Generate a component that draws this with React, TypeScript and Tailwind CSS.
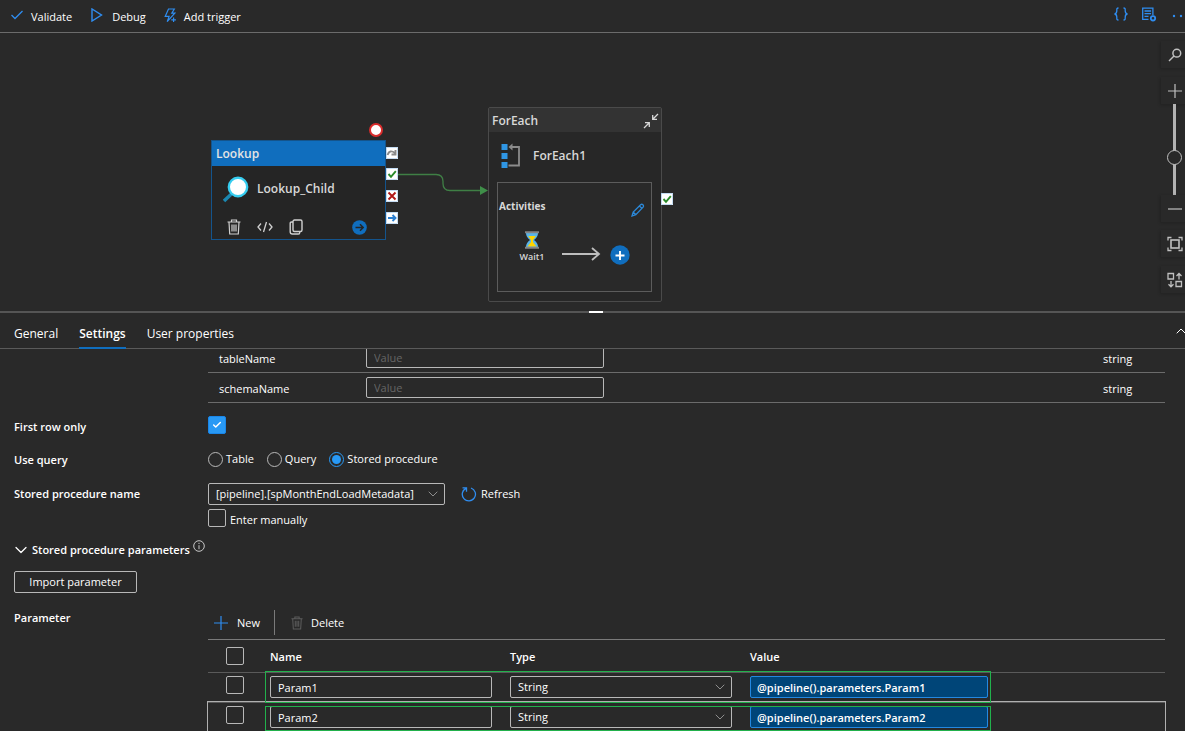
import React, { useState } from 'react';
import { Check, ChevronDown, ChevronUp } from 'lucide-react';

interface ProcParam {
    name: string;
    type: string;
    value: string;
}

const params: ProcParam[] = [
    { name: 'Param1', type: 'String', value: '@pipeline().parameters.Param1' },
    { name: 'Param2', type: 'String', value: '@pipeline().parameters.Param2' },
];

const TrashIcon = ({ className }: { className?: string }) => (
    <svg className={className} viewBox="0 0 14 16" fill="none" stroke="currentColor" strokeWidth="1.2">
        <path d="M0.5 3h13M4.5 3V1h5v2M2 3l0.7 12h8.6L12 3M5 5.5v7M7 5.5v7M9 5.5v7" />
    </svg>
);

const Checkbox = ({ label, id, defaultChecked }: { label?: string; id?: string; defaultChecked?: boolean }) => (
    <span className="relative block size-[18px] shrink-0">
        <input
            id={id}
            type="checkbox"
            aria-label={label}
            defaultChecked={defaultChecked}
            className="peer block size-[18px] appearance-none rounded-xs border border-[#b8b8b8] checked:border-[#1a86e8] checked:bg-[#2899f5]"
        />
        <Check size={10} strokeWidth={3.5} className="pointer-events-none absolute left-1 top-1 hidden text-white peer-checked:block" />
    </span>
);

const Radio = ({ label, defaultChecked }: { label: string; defaultChecked?: boolean }) => (
    <label className="flex items-center gap-[3px]">
        <input
            type="radio"
            name="useQuery"
            defaultChecked={defaultChecked}
            className="grid size-[15px] appearance-none place-content-center rounded-full border border-[#b8b8b8] before:size-[9px] before:rounded-full checked:border-[#2899f5] checked:before:bg-[#2899f5]"
        />
        {label}
    </label>
);

interface SelectProps {
    label?: string;
    id?: string;
    options: string[];
    className: string;
}

const Select = ({ label, id, options, className }: SelectProps) => (
    <div className={`relative ${className}`}>
        <select
            id={id}
            aria-label={label}
            className="block h-[22px] w-full appearance-none rounded-xs border border-[#b8b8b8] bg-transparent pl-[7px] pr-6"
        >
            {options.map((o) => (
                <option key={o}>{o}</option>
            ))}
        </select>
        <ChevronDown size={16} strokeWidth={1.2} className="pointer-events-none absolute right-1 top-[3px] text-[#a8a8a8]" />
    </div>
);

const Toolbar = () => (
    <header className="flex h-[33px] shrink-0 items-center justify-between border-b border-[#6b6b6b] pl-[11px]">
        <div className="flex items-center gap-[18px] pt-[2px]">
            <button className="flex items-center gap-2">
                <svg className="-mt-1 h-3 w-3 text-[#2f8df0]" viewBox="0 0 12 12" fill="none" stroke="currentColor" strokeWidth="1.3">
                    <path d="M0.5 6l3.5 3.5L11.5 2" />
                </svg>
                Validate
            </button>
            <button className="flex items-center gap-2">
                <svg className="-mt-1 size-[14px] text-[#2f8df0]" viewBox="0 0 14 14" fill="none" stroke="currentColor" strokeWidth="1.4">
                    <path d="M2 1v12L11.5 7z" />
                </svg>
                Debug
            </button>
            <button className="flex items-center gap-2">
                <svg className="-mt-1 h-[15px] w-3 text-[#2f8df0]" viewBox="0 0 12 15" fill="none" stroke="currentColor" strokeWidth="1.2">
                    <path d="M4.5 1h5.8L7.8 5.2h3L3.2 13.6l1.9-5.2H1.2zM9.6 9.5v4.6M7.3 11.8h4.6" />
                </svg>
                Add trigger
            </button>
        </div>
        <div className="-mr-[14px] flex shrink-0 items-center gap-3 text-[#2f8df0]">
            <button aria-label="Code">
                <svg className="-mt-1 h-[14px] w-4" viewBox="0 0 16 14" fill="none" stroke="currentColor" strokeWidth="1.3">
                    <path d="M5.5 1C3.5 1 3.8 2.2 3.8 3.8S3.4 6.8 1.5 7c1.9.2 2.3 1.6 2.3 3.2S3.5 13 5.5 13M10.5 1c2 0 1.7 1.2 1.7 2.8s.4 3 2.3 3.2c-1.9.2-2.3 1.6-2.3 3.2s.3 2.8-1.7 2.8" />
                </svg>
            </button>
            <button aria-label="Properties">
                <svg className="-mt-1 h-[15px] w-4" viewBox="0 0 16 15" fill="none" stroke="currentColor" strokeWidth="1.3">
                    <path d="M7.5 12.3H1.7V1.2h10.2v7M3.5 4h6.6M3.5 6.7h6.6M3.5 9.4h4" />
                    <circle cx="12" cy="11.3" r="2.2" strokeWidth="1.8" />
                </svg>
            </button>
            <button aria-label="More">
                <svg className="h-1 w-[30px]" viewBox="0 0 30 4" fill="currentColor">
                    <circle cx="5" cy="2" r="1.2" />
                    <circle cx="12" cy="2" r="1.2" />
                    <circle cx="19" cy="2" r="1.2" />
                </svg>
            </button>
        </div>
    </header>
);

const Port = ({ className, color, d }: { className: string; color: string; d: string }) => (
    <svg className={`absolute h-3 w-3 ${className}`} viewBox="0 0 12 12" fill="none">
        <rect width="12" height="12" fill="#fff" />
        <rect x="0.5" y="0.5" width="11" height="11" stroke="#9cc4ea" strokeWidth="0.6" />
        <path d={d} stroke={color} strokeWidth="1.9" />
    </svg>
);

const checkPath = 'M2.5 6l2.5 2.8L9.8 3.2';

const LookupNode = () => (
    <div className="absolute left-[211px] top-[107px] h-[100px] w-[175px] border border-[#14548c] bg-[#252525]">
        <div className="flex h-[25px] items-center bg-[#106ebe] px-1 pt-px font-semibold text-[#e4e4e4]">Lookup</div>
        <div className="flex h-[45px] items-center gap-2 pl-[11px]">
            <svg className="h-7 w-[26px]" viewBox="0 0 26 28" fill="none">
                <path d="M1 26l8-7.5" stroke="#1b87b0" strokeWidth="3.4" />
                <circle cx="15" cy="12" r="9.2" fill="#fff" stroke="#36cdf0" strokeWidth="2.4" />
            </svg>
            <span className="font-semibold text-[#d8d8d8]">Lookup_Child</span>
        </div>
        <div className="flex items-center pl-[15px] pr-[18px] pt-2 text-[#d0d0d0]">
            <button aria-label="Delete activity">
                <TrashIcon className="h-4 w-[14px]" />
            </button>
            <button aria-label="View code" className="ml-4">
                <svg className="h-3 w-4" viewBox="0 0 16 12" fill="none" stroke="currentColor" strokeWidth="1.3">
                    <path d="M4 2.5L1 6l3 3.5M12 2.5L15 6l-3 3.5M9.5 1l-3 10" />
                </svg>
            </button>
            <button aria-label="Clone activity" className="ml-4">
                <svg className="h-4 w-[14px]" viewBox="0 0 14 16" fill="none" stroke="currentColor" strokeWidth="1.4">
                    <rect x="4" y="1" width="9" height="11.5" rx="1.5" />
                    <path d="M4 3H2.5Q1.2 3 1.2 4.3V12.8Q1.2 15 3.4 15H9.5Q10.7 15 10.7 13.8V12.5" />
                </svg>
            </button>
            <svg className="ml-auto size-[15px]" viewBox="0 0 15 15" fill="none">
                <circle cx="7.5" cy="7.5" r="7.3" fill="#106ebe" />
                <path d="M3.5 7.5h7.5M8 4.3l3.2 3.2L8 10.7" stroke="#252525" strokeWidth="1.5" />
            </svg>
        </div>
    </div>
);

const ForEachNode = () => (
    <div className="absolute left-[488px] top-[74px] h-[195px] w-[174px] rounded-xs border border-[#4a4a4a] bg-[#272727] text-[#d8d8d8]">
        <div className="flex h-6 items-center justify-between bg-[#333] pl-[3px] pr-[2px] pt-px">
            <span className="font-semibold">ForEach</span>
            <svg className="h-4 w-4" viewBox="0 0 16 16" fill="none" stroke="currentColor" strokeWidth="1.3">
                <path d="M15 1l-5 5M9.7 2v4.3H14M1 15l5-5M2 9.7h4.3V14" />
            </svg>
        </div>
        <div className="flex h-[47px] items-center gap-3 pl-3">
            <svg className="h-[26px] w-5" viewBox="0 0 20 26" fill="none">
                <path d="M0.5 1h6v6h-6zM0.5 10h6v6h-6zM0.5 19h6v6h-6z" fill="#2f96e4" />
                <path d="M9 4h9v18.5H7.5" stroke="#8c8c8c" strokeWidth="1.8" />
                <path d="M7.5 4l4-3.5v7z" fill="#8c8c8c" />
            </svg>
            <span className="font-semibold">ForEach1</span>
        </div>
        <div className="ml-2 mr-[9px] mt-[3px] h-[110px] border border-[#5c5c5c] bg-[#292929]">
            <div className="flex items-center justify-between pl-px pr-[6px] pt-3">
                <span className="text-[10px] font-bold">Activities</span>
                <svg className="mt-2 size-[14px]" viewBox="0 0 14 14" fill="none" stroke="#2b88d8" strokeWidth="1.3">
                    <path d="M1 13l1.2-4L9.6 1.8q1.2-1 2.3 0t.2 2.4L4.8 11.7zM2.2 9l2.6 2.7M8.5 3l2.6 2.6" />
                </svg>
            </div>
            <div className="flex items-end pl-5 pt-[14px]">
                <div className="flex w-7 flex-col items-center">
                    <svg className="h-[18px] w-4" viewBox="0 0 16 18" fill="none">
                        <path d="M2 2h12q0 4-4 7 4 3 4 7H2q0-4 4-7-4-3-4-7z" fill="#59b4e8" />
                        <path d="M4.2 5h7.6L9 9v2l3.5 4.5h-9L7 11V9z" fill="#ffd400" />
                        <path d="M1 1.3h14M1 16.7h14" stroke="#858585" strokeWidth="2" />
                    </svg>
                    <span className="text-[9px] font-semibold leading-4">Wait1</span>
                </div>
                <svg className="mb-1 ml-4 h-[14px] w-10" viewBox="0 0 40 14" fill="none" stroke="#bdbdbd" strokeWidth="1.8">
                    <path d="M0 7h37M30 1l7 6-7 6" />
                </svg>
                <button aria-label="Add activity" className="ml-2">
                    <svg className="block size-5" viewBox="0 0 20 20">
                        <circle cx="10" cy="10" r="9.7" fill="#106ebe" />
                        <path d="M10 6v9M5.5 10.5h9" stroke="#fff" strokeWidth="1.9" />
                    </svg>
                </button>
            </div>
        </div>
    </div>
);

const railButton = 'flex h-[27px] w-full items-center justify-center shadow-[-1px_1px_3px_rgba(0,0,0,0.2)]';

const ZoomRail = () => (
    <div className="absolute -right-[3px] top-2 flex w-[27px] flex-col items-center text-[#c0c0c0]">
        <button aria-label="Search" className={railButton}>
            <svg className="size-[14px]" viewBox="0 0 14 14" fill="none" stroke="currentColor" strokeWidth="1.5">
                <circle cx="8.8" cy="5.2" r="3.9" />
                <path d="M6 8l-5 5" />
            </svg>
        </button>
        <button aria-label="Zoom in" className={`mt-[9px] ${railButton}`}>
            <svg className="size-[14px]" viewBox="0 0 14 14" stroke="currentColor" strokeWidth="1.2">
                <path d="M7 0v14M0 7h14" />
            </svg>
        </button>
        <input
            type="range"
            aria-label="Zoom level"
            defaultValue={40}
            className="h-[91px] w-4 appearance-none bg-transparent [direction:rtl] [writing-mode:vertical-lr] [&::-webkit-slider-runnable-track]:w-[3px] [&::-webkit-slider-runnable-track]:bg-[#b3b3b3] [&::-webkit-slider-thumb]:-ml-[6px] [&::-webkit-slider-thumb]:size-[15px] [&::-webkit-slider-thumb]:appearance-none [&::-webkit-slider-thumb]:rounded-full [&::-webkit-slider-thumb]:border [&::-webkit-slider-thumb]:border-[#c0c0c0] [&::-webkit-slider-thumb]:bg-[#292929]"
        />
        <button aria-label="Zoom out" className={railButton}>
            <svg className="size-[14px]" viewBox="0 0 14 14" stroke="currentColor" strokeWidth="1.2">
                <path d="M0 7h14" />
            </svg>
        </button>
        <button aria-label="Zoom to fit" className={`mt-2 ${railButton}`}>
            <svg className="size-4" viewBox="0 0 16 16" fill="none" stroke="currentColor" strokeWidth="1.3">
                <path d="M1 4.5v-3h3.5M11.5 1.5H15v3M15 11.5v3h-3.5M4.5 14.5H1v-3" />
                <rect x="4" y="4" width="8" height="8" strokeWidth="1.6" />
            </svg>
        </button>
        <button aria-label="Auto align" className={`mt-[9px] ${railButton}`}>
            <svg className="size-4" viewBox="0 0 16 16" fill="none" stroke="currentColor" strokeWidth="1.3">
                <path d="M1 1.5h5.5V7H1zM9 9.5h5.5v5H9zM12 7.5v-6M9.5 4L12 1.5 14.5 4M4 9v6M1.5 12.3L4 14.8l2.5-2.5" />
            </svg>
        </button>
    </div>
);

const Canvas = () => (
    <main className="relative h-[278px] shrink-0 overflow-hidden text-[12px]">
        <svg className="absolute left-[398px] top-[135px] h-[28px] w-[91px]" viewBox="0 0 91 28" fill="none">
            <path d="M0 6.5h38q7 0 7 7v2q0 7 7 7h30" stroke="#3f7f45" strokeWidth="1.3" />
            <path d="M82 18v9l8-4.5z" fill="#3f8f49" />
        </svg>
        <LookupNode />
        <span className="absolute left-[369px] top-[90px] size-[14px] rounded-full border-2 border-[#d92c2c] bg-white" />
        <Port className="left-[386px] top-[114px]" color="#8a8a8a" d="M1.5 8q2-6 7.5-2M9.5 3v4.5H5.5" />
        <Port className="left-[386px] top-[135px]" color="#2a8a2a" d={checkPath} />
        <Port className="left-[386px] top-[157px]" color="#b01818" d="M2.5 2.5l7 7M9.5 2.5l-7 7" />
        <Port className="left-[386px] top-[179px]" color="#2b7fd0" d="M2 6h7M6.5 3l3 3-3 3" />
        <ForEachNode />
        <Port className="left-[661px] top-[160px]" color="#2a8a2a" d={checkPath} />
        <ZoomRail />
    </main>
);

const tabs = ['General', 'Settings', 'User properties'];

const Tabs = () => {
    const [active, setActive] = useState('Settings');
    return (
        <div className="flex h-9 shrink-0 items-stretch justify-between border-b border-[#5a5a5a] pl-[14px]">
            <nav className="flex gap-[21px] text-[12px]">
                {tabs.map((t) => (
                    <button
                        key={t}
                        onClick={() => setActive(t)}
                        className={
                            t === active
                                ? '-mb-px border-b-2 border-[#106ebe] pt-[7px] font-semibold'
                                : '-mb-px border-b-2 border-transparent pt-[7px]'
                        }
                    >
                        {t}
                    </button>
                ))}
            </nav>
            <button aria-label="Collapse panel" className="-mr-1">
                <ChevronUp size={16} strokeWidth={1.5} />
            </button>
        </div>
    );
};

interface RowProps {
    label: string;
    htmlFor?: string;
    className?: string;
    children: React.ReactNode;
}

const Row = ({ label, htmlFor, className, children }: RowProps) => (
    <div className={`flex items-start ${className ?? ''}`}>
        <label htmlFor={htmlFor} className="w-[194px] shrink-0 font-semibold leading-[22px]">
            {label}
        </label>
        <div className="min-w-0 flex-1">{children}</div>
    </div>
);

const DatasetProperties = () => (
    <table className="w-full border-separate border-spacing-0">
        <tbody>
            {['tableName', 'schemaName'].map((name) => (
                <tr key={name} className="h-[30px]">
                    <td className="w-[158px] border-b border-[#6b6b6b] pl-[11px] pt-[3px]">
                        <label htmlFor={name}>{name}</label>
                    </td>
                    <td className="border-b border-[#6b6b6b] pb-1 pt-1">
                        <input
                            id={name}
                            placeholder="Value"
                            className="block h-[21px] w-[238px] rounded-xs border border-[#b8b8b8] bg-transparent px-[7px] placeholder:text-[#666]"
                        />
                    </td>
                    <td className="w-[62px] border-b border-[#6b6b6b] pt-[3px]">string</td>
                </tr>
            ))}
        </tbody>
    </table>
);

const ParameterTable = () => (
    <div className="relative mt-1">
        <table className="w-full border-separate border-spacing-0 text-left">
            <thead>
                <tr className="h-[33px]">
                    <th className="w-[62px] border-t border-[#7a7a7a] pl-[18px]">
                        <Checkbox label="Select all" />
                    </th>
                    <th className="w-60 border-t border-[#7a7a7a] pt-[2px] font-semibold">Name</th>
                    <th className="w-60 border-t border-[#7a7a7a] pt-[2px] font-semibold">Type</th>
                    <th className="border-t border-[#7a7a7a] pt-[2px] font-semibold">Value</th>
                </tr>
            </thead>
            <tbody>
                {params.map((p) => (
                    <tr key={p.name} className="h-[30px] align-top last:outline last:outline-[#b0b0b0]">
                        <td className="border-t border-[#5a5a5a] pl-[18px] pt-[3px]">
                            <Checkbox label={`Select ${p.name}`} />
                        </td>
                        <td className="border-t border-[#5a5a5a] pt-[3px]">
                            <input
                                aria-label="Name"
                                defaultValue={p.name}
                                className="block h-[22px] w-[222px] rounded-xs border border-[#b8b8b8] bg-transparent px-[7px]"
                            />
                        </td>
                        <td className="border-t border-[#5a5a5a] pt-[3px]">
                            <Select label="Type" options={[p.type]} className="w-[222px]" />
                        </td>
                        <td className="border-t border-[#5a5a5a] pt-[3px]">
                            <input
                                aria-label="Value"
                                defaultValue={p.value}
                                className="block h-[22px] w-[238px] rounded-xs border border-[#2488e0] bg-[#004578] px-[6px] font-semibold"
                            />
                        </td>
                    </tr>
                ))}
            </tbody>
        </table>
        {/* highlight frames over both parameter rows */}
        <div className="pointer-events-none absolute left-[57px] top-8 h-8 w-[726px] border border-[#22b14c]" />
        <div className="pointer-events-none absolute left-[57px] top-[67px] h-[25px] w-[726px] border border-[#22b14c]" />
    </div>
);

const SettingsForm = () => (
    <section className="min-h-0 flex-1 overflow-hidden">
        <div className="-mt-[6px] pl-[14px] pr-5">
            <div className="ml-[194px]">
                <DatasetProperties />
            </div>
            <Row label="First row only" htmlFor="firstRowOnly" className="mt-[13px] h-[22px]">
                <Checkbox id="firstRowOnly" defaultChecked />
            </Row>
            <Row label="Use query" className="mt-[11px] h-[22px]">
                <div className="flex h-5 items-center gap-[13px]">
                    <Radio label="Table" />
                    <Radio label="Query" />
                    <Radio label="Stored procedure" defaultChecked />
                </div>
            </Row>
            <Row label="Stored procedure name" htmlFor="procName" className="mt-3">
                <div className="flex items-center gap-4">
                    <Select id="procName" options={['[pipeline].[spMonthEndLoadMetadata]']} className="w-[237px]" />
                    <button className="flex items-center gap-1">
                        <svg className="size-4 text-[#2f8df0]" viewBox="0 0 16 16" fill="none" stroke="currentColor" strokeWidth="1.3">
                            <path d="M10 2a6.6 6.6 0 1 1-5 .3M1.5 1.8h4v4" />
                        </svg>
                        Refresh
                    </button>
                </div>
                <div className="mt-1 flex h-[18px] items-center gap-1">
                    <Checkbox id="enterManually" />
                    <label htmlFor="enterManually" className="pt-1">
                        Enter manually
                    </label>
                </div>
            </Row>
            <div className="mt-[13px] flex h-5 items-center font-semibold">
                <ChevronDown size={20} strokeWidth={1.5} className="-ml-[3px] mr-px" />
                Stored procedure parameters
                <svg className="mb-2 ml-[3px] size-3" viewBox="0 0 12 12" fill="none" stroke="#c8c8c8">
                    <circle cx="6" cy="6" r="5.3" />
                    <path d="M6 5.2v4M6 2.8v1.2" />
                </svg>
            </div>
            <button className="mt-[11px] flex h-[22px] w-[123px] items-center justify-center rounded-xs border border-[#b8b8b8]">
                Import parameter
            </button>
            <div className="mt-[17px] flex items-start">
                <div className="w-[194px] shrink-0 font-semibold leading-4">Parameter</div>
                <div className="min-w-0 flex-1">
                    <div className="flex h-[25px] items-center">
                        <button className="flex items-center gap-[9px] pl-[6px] pr-[14px]">
                            <svg className="size-[14px] text-[#2f8df0]" viewBox="0 0 14 14" stroke="currentColor" strokeWidth="1.2">
                                <path d="M7 0v14M0 7h14" />
                            </svg>
                            New
                        </button>
                        <span className="h-[25px] border-l border-[#7a7a7a]" />
                        <button className="flex items-center gap-2 pl-4">
                            <TrashIcon className="h-[14px] w-3 text-[#5c5c5c]" />
                            Delete
                        </button>
                    </div>
                    <ParameterTable />
                </div>
            </div>
        </div>
    </section>
);

export default function App() {
    return (
        <div className="flex h-screen flex-col overflow-hidden bg-[#292929] font-['Open_Sans',sans-serif] text-[11px] leading-4 text-white">
            <Toolbar />
            <Canvas />
            <div className="flex h-[2px] shrink-0 justify-center bg-[#555] pl-[6px]">
                <span className="w-[14px] bg-white" />
            </div>
            <Tabs />
            <SettingsForm />
        </div>
    );
}
